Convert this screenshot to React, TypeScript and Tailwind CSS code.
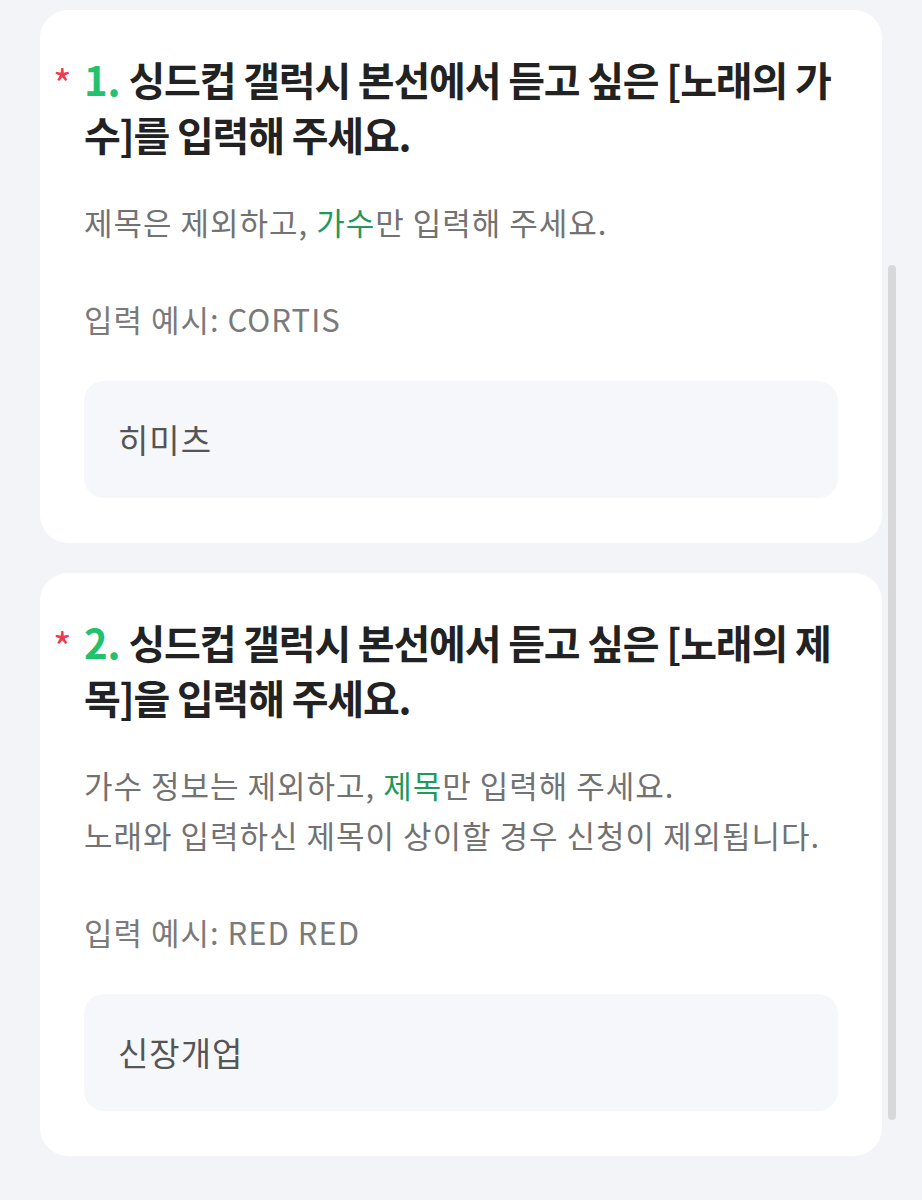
const FONT = '"Noto Sans CJK KR", "Noto Sans", sans-serif';

type Q = {
  no: string;
  head: string;
  desc: React.ReactNode;
  example: string;
  value: string;
};

const questions: Q[] = [
  {
    no: "1.",
    head: "싱드컵 갤럭시 본선에서 듣고 싶은 [노래의 가수]를 입력해 주세요.",
    desc: (
      <>
        제목은 제외하고, <span className="text-[#22995a]">가수</span>만 입력해 주세요.
      </>
    ),
    example: "입력 예시: CORTIS",
    value: "히미츠",
  },
  {
    no: "2.",
    head: "싱드컵 갤럭시 본선에서 듣고 싶은 [노래의 제목]을 입력해 주세요.",
    desc: (
      <>
        가수 정보는 제외하고, <span className="text-[#22995a]">제목</span>만 입력해 주세요.
        <br />
        노래와 입력하신 제목이 상이할 경우 신청이 제외됩니다.
      </>
    ),
    example: "입력 예시: RED RED",
    value: "신장개업",
  },
];

function QuestionCard({ q }: { q: Q }) {
  return (
    <div className="rounded-[28px] bg-white px-[44px] pt-[42px] pb-[45px]">
      <h2 className="relative break-all text-[40px] font-bold leading-[55px] tracking-[-1.2px] text-[#222222]">
        {/* required marker hangs in the left padding */}
        <span className="absolute -left-[31px] top-[11px] text-[40px] leading-[40px] font-normal tracking-normal text-[#ef3a4f]">
          *
        </span>
        <span className="tracking-normal text-[#22c26c]">{q.no}</span> {q.head}
      </h2>
      <p className="mt-[35px] text-[31px] leading-[50px] tracking-[1px] text-[#727272]">{q.desc}</p>
      <p className="mt-[47px] text-[31px] leading-[50px] tracking-[1px] text-[#7a7a7a]">{q.example}</p>
      <div className="mt-[37px] flex h-[117px] items-center rounded-[20px] bg-[#f6f7fa] px-[34px] text-[33px] tracking-[1px] text-[#555555]">
        {q.value}
      </div>
    </div>
  );
}

export default function App() {
  return (
    <div className="relative h-[1200px] w-[922px] overflow-hidden bg-[#f3f4f8]" style={{ fontFamily: FONT }}>
      <div className="flex flex-col gap-[30px] pt-[10px] pl-[40px] pr-[40px]">
        {questions.map((q) => (
          <QuestionCard key={q.no} q={q} />
        ))}
      </div>
      <div className="absolute top-[265px] left-[888px] h-[855px] w-[8px] rounded-full bg-[#d8d8da]" />
    </div>
  );
}
